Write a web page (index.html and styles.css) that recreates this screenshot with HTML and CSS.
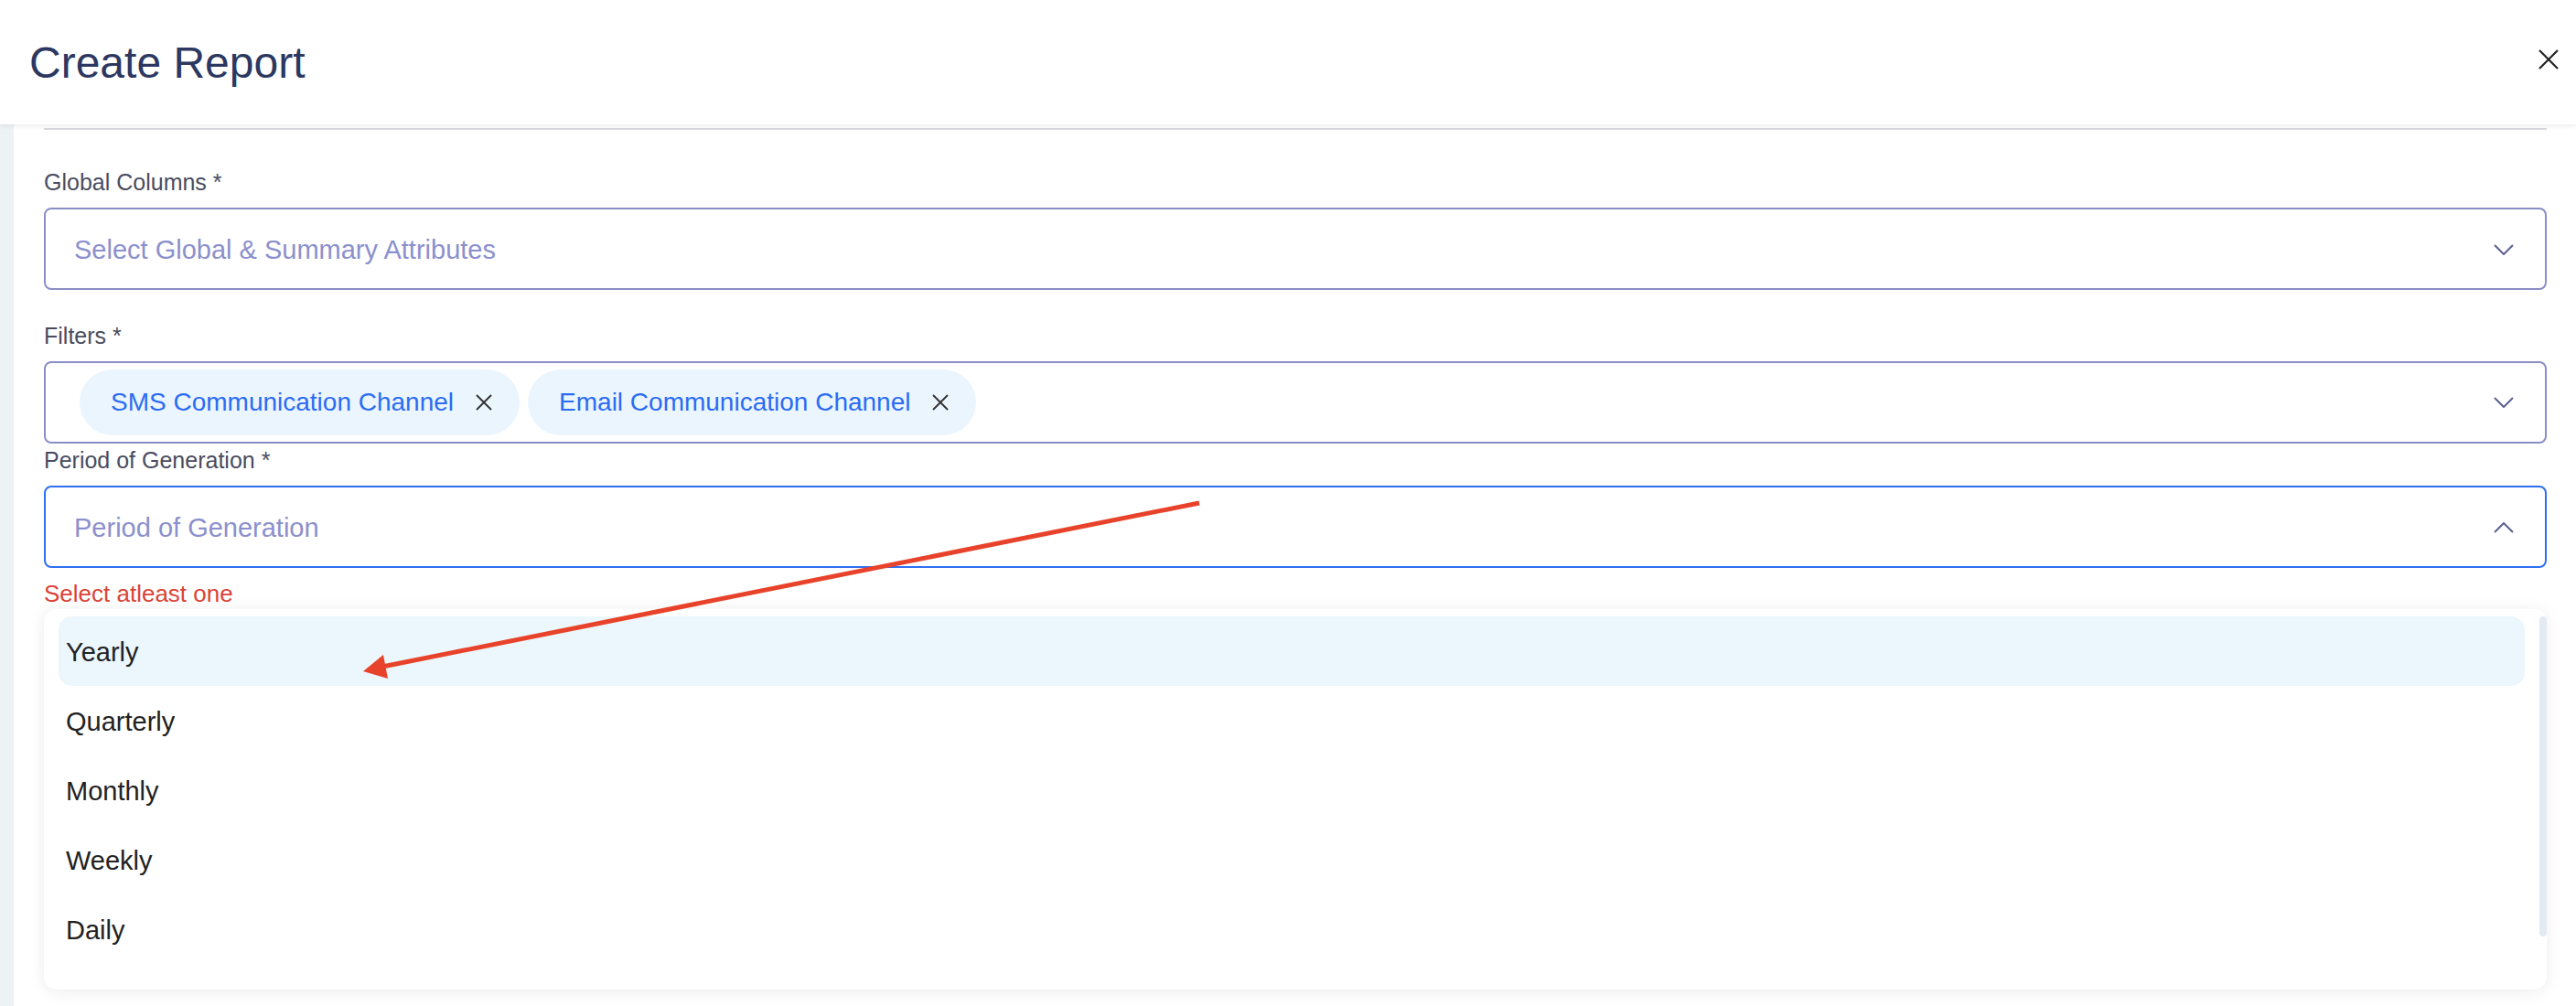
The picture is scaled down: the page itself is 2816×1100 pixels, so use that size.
FILE: index.html
```html
<!DOCTYPE html>
<html lang="en">
<head>
    <meta charset="UTF-8">
    <meta name="viewport" content="width=device-width, initial-scale=1.0">
    <title>Create Report</title>
    <link rel="stylesheet" href="styles.css">
</head>
<body>
    <div class="page">
        <header class="modal-header">
            <h1>Create Report</h1>
            <button class="close-button" aria-label="Close">
                <svg width="22" height="22" viewBox="0 0 22 22"><path d="M1 1L21 21M21 1L1 21"/></svg>
            </button>
        </header>

        <div class="modal-body">
            <div class="side-strip"></div>

            <div class="report-form">
                <div class="divider"></div>

                <div class="form-group first">
                    <label>Global Columns *</label>
                    <div class="select-box">
                        <span class="placeholder">Select Global &amp; Summary Attributes</span>
                        <svg class="chevron" width="22" height="12" viewBox="0 0 22 12"><path d="M1 1L11 11L21 1"/></svg>
                    </div>
                </div>

                <div class="form-group second">
                    <label>Filters *</label>
                    <div class="select-box with-chips">
                        <div class="chips">
                            <span class="chip">SMS Communication Channel
                                <svg width="20" height="20" viewBox="0 0 20 20"><path d="M2 2L18 18M18 2L2 18"/></svg>
                            </span>
                            <span class="chip">Email Communication Channel
                                <svg width="20" height="20" viewBox="0 0 20 20"><path d="M2 2L18 18M18 2L2 18"/></svg>
                            </span>
                        </div>
                        <svg class="chevron" width="22" height="12" viewBox="0 0 22 12"><path d="M1 1L11 11L21 1"/></svg>
                    </div>
                </div>

                <div class="form-group third">
                    <label>Period of Generation *</label>
                    <div class="select-box focused">
                        <span class="placeholder">Period of Generation</span>
                        <svg class="chevron" width="22" height="12" viewBox="0 0 22 12"><path d="M1 11L11 1L21 11"/></svg>
                    </div>
                    <p class="error-text">Select atleast one</p>
                </div>

                <div class="dropdown-menu">
                    <ul class="options">
                        <li class="active">Yearly</li>
                        <li>Quarterly</li>
                        <li>Monthly</li>
                        <li>Weekly</li>
                        <li>Daily</li>
                    </ul>
                    <div class="scroll-track"></div>
                </div>
            </div>
        </div>

        <!-- annotation arrow -->
        <svg class="annotation" width="2816" height="1100" viewBox="0 0 2816 1100">
            <line x1="1311" y1="550" x2="418" y2="729"/>
            <polygon points="397,734 419,716 424,742"/>
        </svg>
    </div>
</body>
</html>
```

FILE: styles.css
```css
* {
    margin: 0;
    padding: 0;
    box-sizing: border-box;
}

html, body {
    height: 100%;
}

body {
    font-family: 'Liberation Sans', Helvetica, Arial, sans-serif;
    background: #fff;
    color: #222;
    overflow: hidden;
}

.page {
    position: relative;
    min-height: 100vh;
    display: flex;
    flex-direction: column;
}

.modal-header {
    position: relative;
    z-index: 1;
    height: 136px;
    padding: 0 19px 0 32px;
    display: flex;
    align-items: center;
    justify-content: space-between;
    background: #fff;
    box-shadow: 0 2px 5px rgba(0, 0, 0, 0.07);
}

.modal-header h1 {
    font-size: 48px;
    font-weight: 400;
    color: #2d3861;
}

.close-button {
    background: none;
    border: none;
    width: 22px;
    height: 22px;
    margin-bottom: 6px;
    cursor: pointer;
}

.close-button svg path {
    stroke: #222;
    stroke-width: 2.2;
    fill: none;
}

.modal-body {
    flex: 1;
    display: flex;
}

.side-strip {
    width: 15px;
    background: #edf2f5;
}

.report-form {
    flex: 1;
    padding: 0 32px 0 33px;
}

.divider {
    margin-top: 4px;
    height: 2px;
    background: #d8d9de;
}

.form-group label {
    display: block;
    font-size: 25px;
    line-height: 28px;
    color: #4a4c5e;
    margin-bottom: 14px;
    padding-top: 1px;
}

.form-group.first {
    margin-top: 42px;
}

.form-group.second {
    margin-top: 35px;
}

.form-group.third {
    margin-top: 3px;
}

.select-box {
    height: 90px;
    border: 2px solid #8a8ec6;
    border-radius: 8px;
    padding: 2px 34px 0 31px;
    display: flex;
    align-items: center;
    justify-content: space-between;
    background: #fff;
}

.select-box.focused {
    border-color: #2f6ff2;
}

.select-box.with-chips {
    padding-top: 0;
    padding-left: 37px;
}

.placeholder {
    font-size: 29px;
    color: #8b90cd;
}

.chevron path {
    stroke: #5d6090;
    stroke-width: 2;
    fill: none;
}

.chips {
    display: flex;
    gap: 9px;
}

.chip {
    height: 72px;
    padding: 0 29px 0 34px;
    border-radius: 36px;
    background: #ebf5fe;
    color: #2b6cf2;
    font-size: 28px;
    display: flex;
    align-items: center;
    gap: 23px;
}

.chip svg path {
    stroke: #2f2f2f;
    stroke-width: 1.8;
    fill: none;
}

.error-text {
    margin-top: 14px;
    font-size: 26px;
    line-height: 28px;
    color: #d94336;
}

.dropdown-menu {
    margin-top: 3px;
    display: flex;
    padding: 8px 0 28px 16px;
    background: #fff;
    border-radius: 14px;
    box-shadow: 0 2px 18px rgba(0, 0, 0, 0.08);
}

.options {
    flex: 1;
    list-style: none;
}

.options li {
    height: 76px;
    line-height: 78px;
    padding-left: 8px;
    font-size: 29px;
    color: #222;
    border-radius: 15px;
}

.options li.active {
    background: #ecf6fd;
}

.scroll-track {
    width: 8px;
    height: 350px;
    margin-left: 16px;
    background: #e4eaf3;
    border-radius: 4px;
}

.annotation {
    position: absolute;
    top: 0;
    left: 0;
    pointer-events: none;
}

.annotation line {
    stroke: #e8432a;
    stroke-width: 5;
}

.annotation polygon {
    fill: #e8432a;
}
```
